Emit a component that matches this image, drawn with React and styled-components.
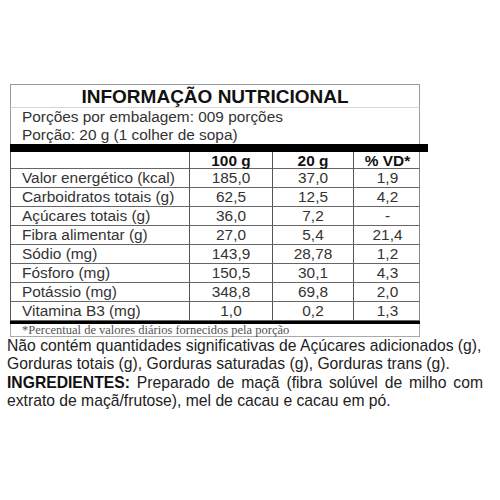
import styled, { createGlobalStyle } from "styled-components";

const GlobalStyle = createGlobalStyle`
  body {
    margin: 0;
    background: #fff;
    font-family: "Liberation Sans", Arial, sans-serif;
    color: #222;
  }
`;

const rows = [
  ["Valor energético (kcal)", "185,0", "37,0", "1,9"],
  ["Carboidratos totais (g)", "62,5", "12,5", "4,2"],
  ["Açúcares totais (g)", "36,0", "7,2", "-"],
  ["Fibra alimentar (g)", "27,0", "5,4", "21,4"],
  ["Sódio (mg)", "143,9", "28,78", "1,2"],
  ["Fósforo (mg)", "150,5", "30,1", "4,3"],
  ["Potássio (mg)", "348,8", "69,8", "2,0"],
  ["Vitamina B3 (mg)", "1,0", "0,2", "1,3"],
];

const App = () => {
  return (
    <Page>
      <GlobalStyle />
      <Label>
        <Title>INFORMAÇÃO NUTRICIONAL</Title>
        <Serving>
          <div>Porções por embalagem: 009 porções</div>
          <div>Porção: 20 g (1 colher de sopa)</div>
        </Serving>
        <ThickBar />
        <Row $header>
          <Cell />
          <Cell $center $bold>100 g</Cell>
          <Cell $center $bold>20 g</Cell>
          <Cell $center $bold>% VD*</Cell>
        </Row>
        {rows.map((r) => (
          <Row key={r[0]}>
            <Cell>{r[0]}</Cell>
            <Cell $center>{r[1]}</Cell>
            <Cell $center>{r[2]}</Cell>
            <Cell $center>{r[3]}</Cell>
          </Row>
        ))}
        <EndLine />
        <Footnote>*Percentual de valores diários fornecidos pela porção</Footnote>
      </Label>
      <Notes>
        <p>
          Não contém quantidades significativas de Açúcares adicionados (g),
          Gorduras totais (g), Gorduras saturadas (g), Gorduras trans (g).
        </p>
        <p className="justify">
          <b>INGREDIENTES:</b> Preparado de maçã (fibra solúvel de milho com
          extrato de maçã/frutose), mel de cacau e cacau em pó.
        </p>
      </Notes>
    </Page>
  );
};

const Page = styled.main`
  padding: 84px 0 0 7px;
`;

const Label = styled.section`
  width: 410px;
  margin-left: 3px;
`;

const Title = styled.h1`
  margin: 0;
  height: 22px;
  border: 1px solid #9a9a9a;
  border-bottom-color: #d6d6d6;
  font-size: 19px;
  font-weight: 700;
  line-height: 23px;
  text-align: center;
  color: #111;
`;

const Serving = styled.div`
  border-left: 1px solid #9a9a9a;
  border-right: 1px solid #9a9a9a;
  padding: 0 0 0 11px;
  font-size: 15.4px;
  line-height: 18px;
  color: #333;
`;

const ThickBar = styled.div`
  width: 418px;
  height: 8px;
  background: #000;
`;

const Row = styled.div`
  display: grid;
  grid-template-columns: 178px 83px 81px 68px;
  height: ${(p) => (p.$header ? "17px" : "19px")};
  box-sizing: border-box;
  border-left: 1px solid #555;
  border-right: 1px solid #888;
  border-bottom: 1px solid #666;
  font-size: 15.4px;
  line-height: 18px;
  color: #333;
`;

const Cell = styled.div`
  padding-left: ${(p) => (p.$center ? "0" : "11px")};
  text-align: ${(p) => (p.$center ? "center" : "left")};
  font-weight: ${(p) => (p.$bold ? 700 : 400)};
  color: ${(p) => (p.$bold ? "#111" : "#333")};
  white-space: nowrap;
  & + & {
    border-left: 1px solid #555;
  }
`;

const EndLine = styled.div`
  height: 3px;
  background: #000;
`;

const Footnote = styled.div`
  height: 12px;
  border: 1px solid #aaa;
  border-top: none;
  padding-left: 11px;
  font-family: "Liberation Serif", "Times New Roman", serif;
  font-size: 12.5px;
  line-height: 12px;
  color: #555;
  white-space: nowrap;
`;

const Notes = styled.div`
  width: 476px;
  font-size: 15.7px;
  line-height: 18.3px;
  color: #222;
  p {
    margin: 0;
  }
  .justify {
    text-align: justify;
  }
  b {
    color: #111;
  }
`;

export default App;
